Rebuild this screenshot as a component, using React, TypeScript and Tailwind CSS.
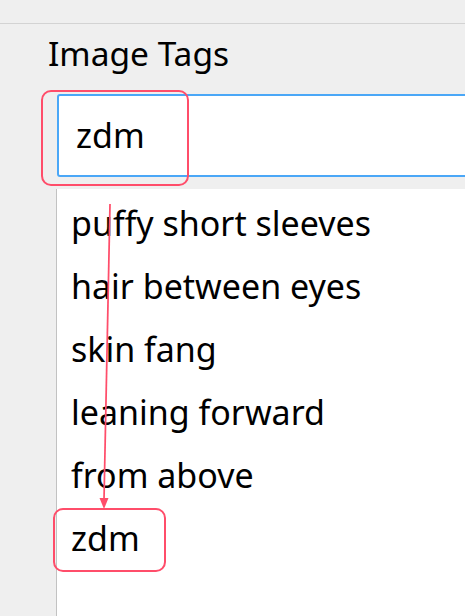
const tags = ["puffy short sleeves", "hair between eyes", "skin fang", "leaning forward", "from above", "zdm"];

export default function App() {
  return (
    <div className="relative h-[616px] w-[465px] overflow-hidden bg-[#efefef] font-['Noto_Sans',sans-serif] text-black">
      <div className="h-[23px]" />
      <div className="border-t border-[#d3d3d3] pt-[7px]">
        <h2 className="pl-[48px] text-[33.5px] leading-[44px]">Image Tags</h2>
        <div className="ml-[57px] mt-[19px] flex h-[83px] w-[460px] items-center rounded-[3px] border-2 border-[#4aa7f7] bg-white pl-[17px] text-[34px]">
          zdm
        </div>
        <ul className="ml-[56px] mt-[12px] h-[440px] border-l border-[#c2c2c2] bg-white pt-[3px]">
          {tags.map((t) => (
            <li key={t} className="flex h-[63px] items-center pl-[14px] text-[34px]">
              {t}
            </li>
          ))}
        </ul>
      </div>

      {/* annotation overlay */}
      <div className="absolute left-[41px] top-[90px] h-[96px] w-[148px] rounded-[10px] border-2 border-[#ff4d6a]" />
      <div className="absolute left-[53px] top-[508px] h-[64px] w-[113px] rounded-[10px] border-2 border-[#ff4d6a]" />
      <svg className="absolute left-0 top-0" width="465" height="616">
        <line x1="110" y1="204" x2="104" y2="500" stroke="#ff4d6a" strokeWidth="1.75" />
        <path d="M99.5 498 L104 509 L108.5 498 Z" fill="#ff4d6a" />
      </svg>
    </div>
  );
}
